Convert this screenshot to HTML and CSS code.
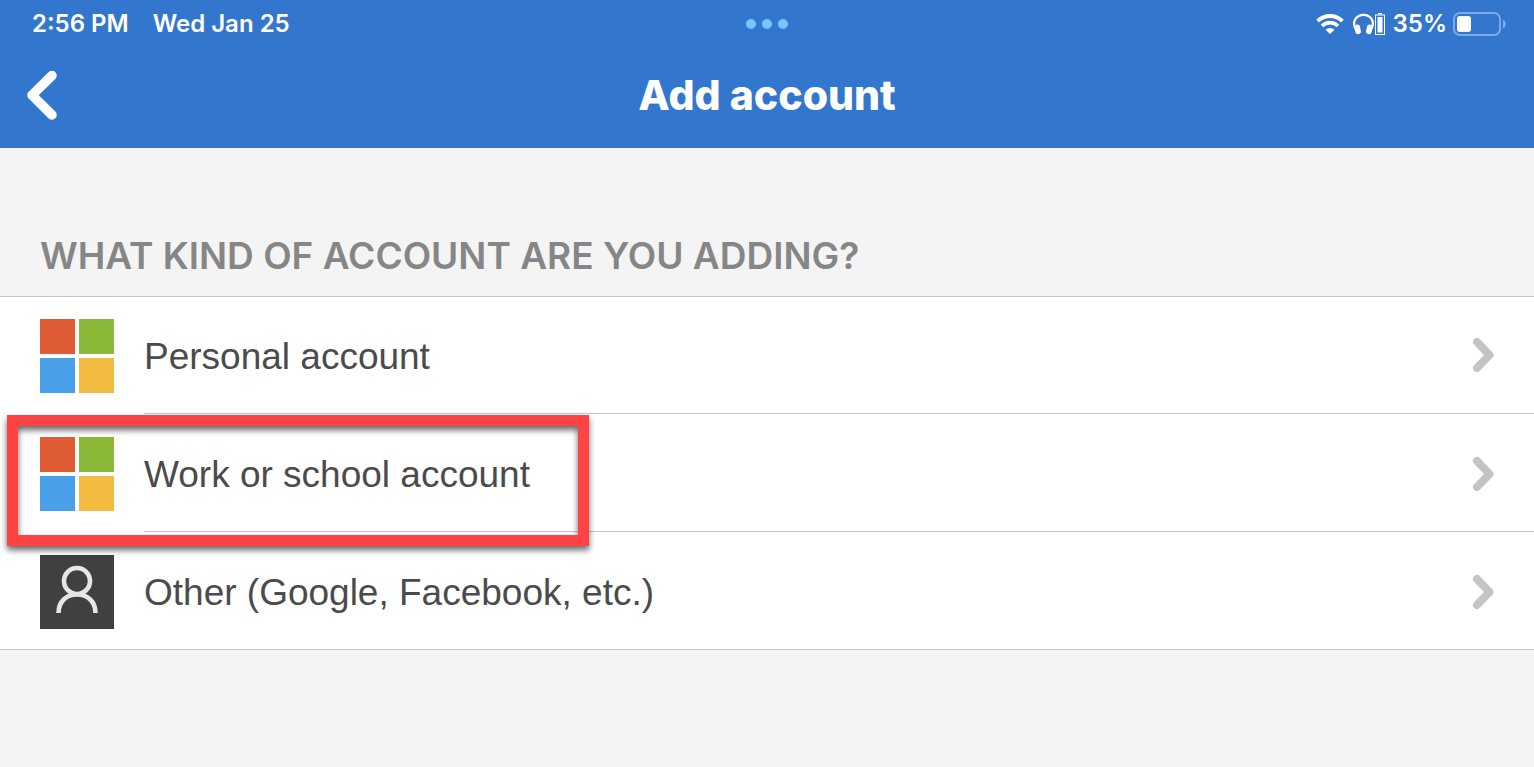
FILE: index.html
```
<!DOCTYPE html>
<html lang="en">
<head>
  <meta charset="UTF-8" />
  <meta name="viewport" content="width=device-width, initial-scale=1.0"/>
  <title>Add account</title>
  <link rel="stylesheet" href="styles.css">
</head>
<body>
  <header class="header">
    <!-- Status bar -->
    <div class="status-bar">
      <div class="status-left">
        <span>2:56 PM</span>
        <span>Wed Jan 25</span>
      </div>
      <div class="dots"><i></i><i></i><i></i></div>
      <div class="status-right">
        <svg class="wifi" viewBox="0 0 28 20" width="28" height="20" fill="none" stroke="#fff">
          <path d="M1.600 7.200A17.600 17.600 0 0 1 26.400 7.200" stroke-width="4"/>
          <path d="M6 11.900A11.300 11.300 0 0 1 22 11.900" stroke-width="3.600"/>
          <path d="M14 20L9.600 15.700A6.500 6.500 0 0 1 18.400 15.700Z" fill="#fff" stroke="none"/>
        </svg>
        <svg class="headphones" viewBox="0 0 32 24" width="32" height="24">
          <path d="M2.600 17C-1.500 9.500 3.500 2.800 10.500 2.800S22.500 9.500 18.400 17" fill="none" stroke="#fff" stroke-width="2.200"/>
          <rect x="1.800" y="12.500" width="5.600" height="9.600" rx="2.500" fill="#fff" transform="rotate(-12 5 17)"/>
          <rect x="13.600" y="12.500" width="5.600" height="9.600" rx="2.500" fill="#fff" transform="rotate(12 16 17)"/>
          <rect x="22.500" y="3" width="9" height="19.500" fill="none" stroke="#fff"/>
          <rect x="24.500" y="5" width="5" height="15.500" fill="#fff"/>
          <rect x="25" y="1" width="4" height="1.500" fill="#fff"/>
        </svg>
        <span>35%</span>
        <svg class="battery" viewBox="0 0 54 24" width="54" height="24">
          <rect x="1" y="1" width="46" height="22" rx="6" fill="none" stroke="#7baae4" stroke-width="2"/>
          <rect x="4" y="4" width="14" height="16" rx="3" fill="#fff"/>
          <path d="M50 7.500Q52.800 9 52.800 12T50 16.500Z" fill="#7baae4"/>
        </svg>
      </div>
    </div>

    <!-- Title bar -->
    <div class="nav-bar">
      <button type="button" class="back" aria-label="Back">
        <svg viewBox="0 0 32 50" width="32" height="50" fill="none" stroke="#fff" stroke-width="9.500" stroke-linecap="round" stroke-linejoin="round">
          <path d="M26 5.500L6 25.200L26 45"/>
        </svg>
      </button>
      <h1>Add account</h1>
    </div>
  </header>

  <main>
    <h2>WHAT KIND OF ACCOUNT ARE YOU ADDING?</h2>
    <ul class="account-list">
      <li>
        <a href="#personal">
          <span class="ms-logo"><i class="red"></i><i class="green"></i><i class="blue"></i><i class="yellow"></i></span>
          <span class="row">
            <span>Personal account</span>
            <svg class="chevron" viewBox="0 0 24 36" width="24" height="36"><path d="M5 5L17.500 18L5 31"/></svg>
          </span>
        </a>
      </li>
      <li>
        <a href="#work">
          <span class="ms-logo"><i class="red"></i><i class="green"></i><i class="blue"></i><i class="yellow"></i></span>
          <span class="row">
            <span>Work or school account</span>
            <svg class="chevron" viewBox="0 0 24 36" width="24" height="36"><path d="M5 5L17.500 18L5 31"/></svg>
          </span>
        </a>
        <div class="highlight"></div>
      </li>
      <li>
        <a href="#other">
          <svg class="person" viewBox="0 0 74 74" width="74" height="74" fill="none" stroke="#e6e6e6" stroke-width="4.600">
            <rect width="74" height="74" fill="#404040" stroke="none"/>
            <circle cx="37" cy="26" r="13"/>
            <path d="M18.500 58C18.500 46 27 39.500 37 39.500S55.500 46 55.500 58"/>
          </svg>
          <span class="row">
            <span>Other (Google, Facebook, etc.)</span>
            <svg class="chevron" viewBox="0 0 24 36" width="24" height="36"><path d="M5 5L17.500 18L5 31"/></svg>
          </span>
        </a>
      </li>
    </ul>
  </main>
</body>
</html>
```
FILE: styles.css
```
* {
  box-sizing: border-box;
  margin: 0;
  padding: 0;
}

body {
  background-color: #f4f4f4;
  font-family: Inter, 'Liberation Sans', sans-serif;
}

.header {
  background-color: #3376cd;
  color: #fff;
}

/* Status bar */
.status-bar {
  display: grid;
  grid-template-columns: 1fr auto 1fr;
  align-items: center;
  height: 48px;
  padding: 0 32px;
  font-size: 24px;
  font-weight: 600;
  line-height: 26px;
  white-space: nowrap;
}

.status-left {
  display: flex;
  gap: 24px;
}

.dots {
  display: flex;
  gap: 6px;
}

.dots i {
  width: 10px;
  height: 10px;
  border-radius: 50%;
  background-color: #76c5ff;
}

.status-right {
  display: flex;
  align-items: center;
  justify-content: flex-end;
  margin-right: -5px;
}

.headphones {
  margin: 0 8px 0 9px;
}

.battery {
  margin-left: 6px;
}

/* Title bar */
.nav-bar {
  display: grid;
  grid-template-columns: 1fr auto 1fr;
  align-items: center;
  height: 100px;
  padding: 0 26px 6px;
}

.back {
  display: flex;
  justify-self: start;
  background: none;
  border: none;
  cursor: pointer;
}

h1 {
  font-size: 41px;
  font-weight: 800;
}

h2 {
  padding: 84px 40px 16px;
  font-size: 37px;
  font-weight: 600;
  line-height: 48px;
  color: #868686;
}

/* Account choices */
.account-list {
  list-style: none;
  background-color: #fff;
  border-bottom: 1px solid #c4c4c4;
  font-family: 'Liberation Sans', Arial, sans-serif;
  font-size: 37px;
  color: #4b4b4b;
}

.account-list li {
  position: relative;
}

.account-list li:first-child {
  border-top: 1px solid #c4c4c4;
}

.account-list a {
  display: flex;
  gap: 30px;
  padding-left: 40px;
  color: inherit;
  text-decoration: none;
}

.ms-logo,
.person {
  flex: none;
  width: 74px;
  height: 74px;
  margin-top: 23px;
}

.ms-logo {
  display: grid;
  grid-template-columns: 1fr 1fr;
  gap: 4px;
}

li:first-child .ms-logo {
  margin-top: 22px;
}

.red {
  background-color: #e05c35;
}

.green {
  background-color: #8bb836;
}

.blue {
  background-color: #4a9fe9;
}

.yellow {
  background-color: #f4bb41;
}

.row {
  display: flex;
  flex: 1;
  align-items: center;
  justify-content: space-between;
  min-height: 118px;
  padding: 5px 38px 0 0;
  border-bottom: 1px solid #c4c4c4;
}

li:first-child .row {
  min-height: 117px;
  padding-top: 3px;
}

li:last-child .row {
  border-bottom: none;
  min-height: 117px;
}

.chevron {
  flex: none;
  margin-bottom: 3px;
  fill: none;
  stroke: #c4c4c6;
  stroke-width: 8;
  stroke-linecap: round;
  stroke-linejoin: round;
}

/* Red callout frame round the work account */
.highlight {
  position: absolute;
  z-index: 1;
  top: 1px;
  left: 7px;
  width: 582px;
  height: 131px;
  border: 11px solid #fe4344;
  filter: drop-shadow(0 4px 3px rgba(0, 0, 0, 0.6));
  pointer-events: none;
}
```
